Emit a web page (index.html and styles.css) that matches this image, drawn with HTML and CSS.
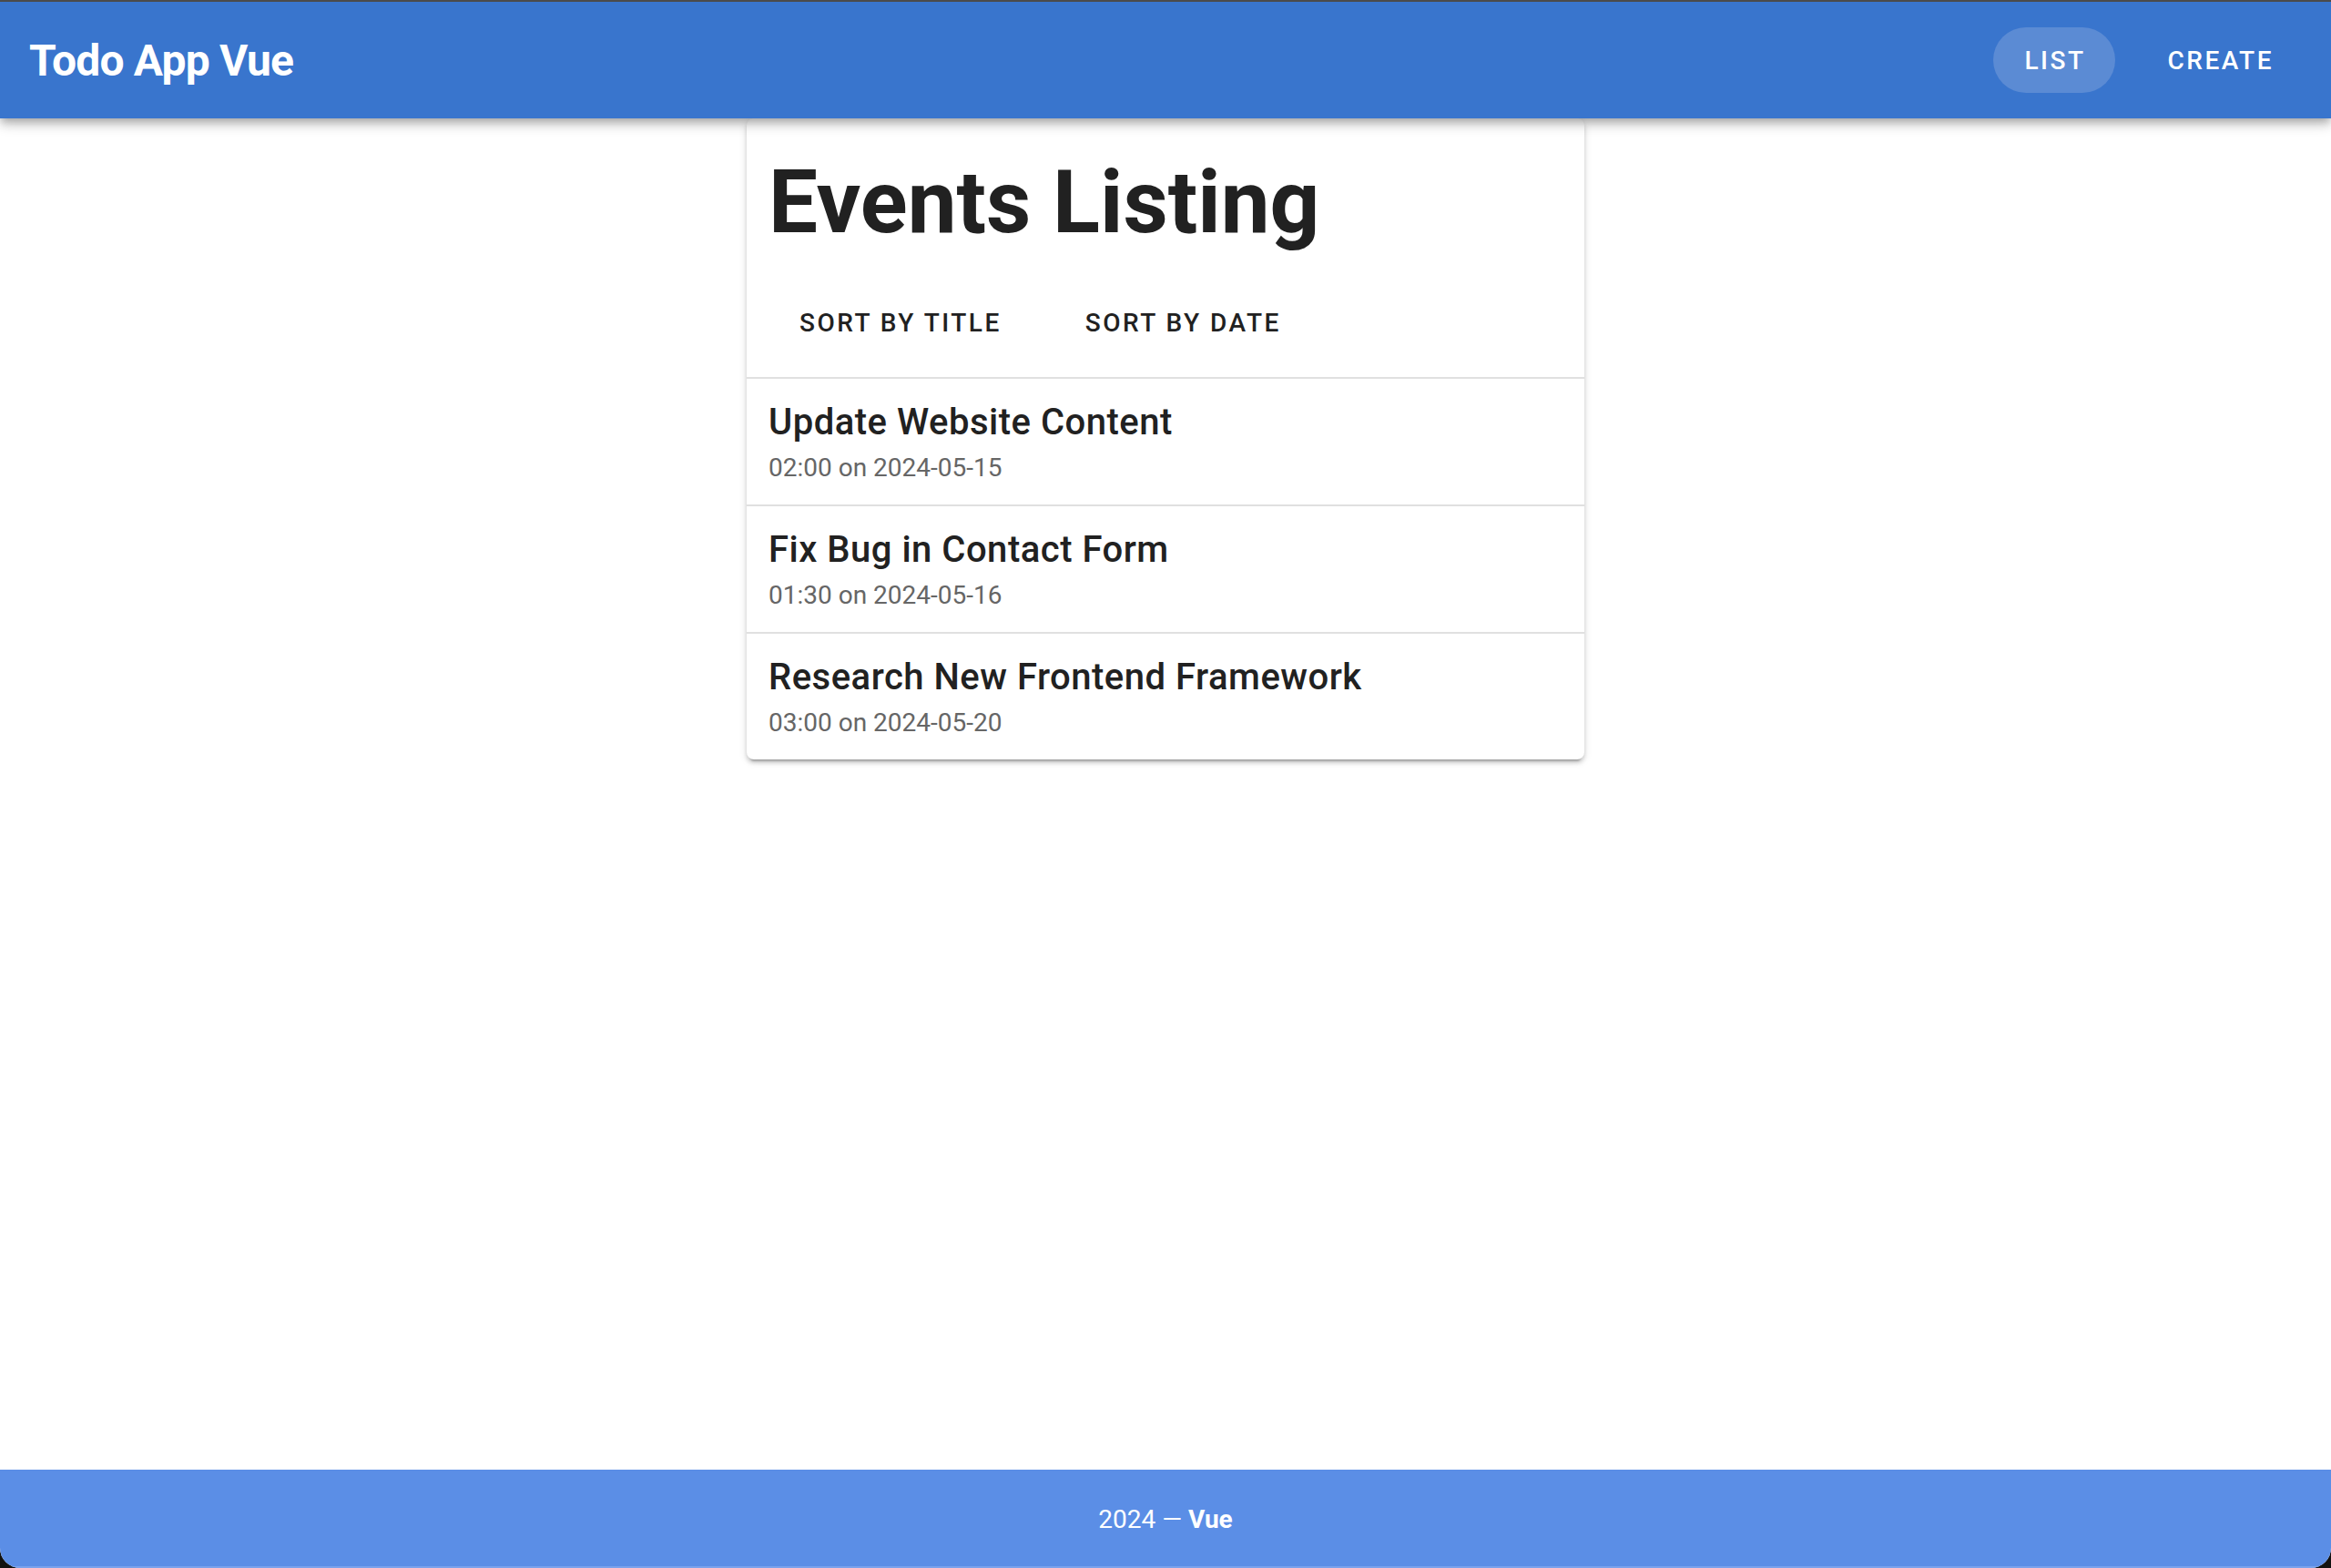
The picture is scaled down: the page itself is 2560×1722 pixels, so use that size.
FILE: index.html
```html
<!DOCTYPE html>
<html lang="en">
<head>
<meta charset="utf-8">
<title>Todo App Vue</title>
<link rel="stylesheet" href="styles.css">
</head>
<body>
<div class="app">
  <header class="app-bar">
    <div class="app-title">Todo App Vue</div>
    <nav class="nav">
      <a class="nav-btn active">List</a>
      <a class="nav-btn">Create</a>
    </nav>
  </header>
  <main class="main">
    <section class="card">
      <div class="card-head">
        <h1 class="card-title">Events Listing</h1>
        <div class="sort-row">
          <button class="sort-btn">Sort by title</button>
          <button class="sort-btn">Sort by date</button>
        </div>
      </div>
      <ul class="events">
        <li class="event">
          <div class="event-title">Update Website Content</div>
          <div class="event-sub">02:00 on 2024-05-15</div>
        </li>
        <li class="event">
          <div class="event-title">Fix Bug in Contact Form</div>
          <div class="event-sub">01:30 on 2024-05-16</div>
        </li>
        <li class="event">
          <div class="event-title">Research New Frontend Framework</div>
          <div class="event-sub">03:00 on 2024-05-20</div>
        </li>
      </ul>
    </section>
  </main>
  <footer class="footer">2024 — <strong>Vue</strong></footer>
</div>
</body>
</html>
```

FILE: styles.css
```css
html, body {
  margin: 0;
  padding: 0;
  height: 100%;
}
body {
  background: #121210;
  font-family: Roboto, "Noto Sans", "Liberation Sans", sans-serif;
  color: #212121;
}
.app {
  height: 1722px;
  display: flex;
  flex-direction: column;
  background: #ffffff;
  border-top: 2px solid #4b4b4b;
  border-radius: 0 0 22px 22px;
  overflow: hidden;
  box-sizing: border-box;
}
.app-bar {
  position: relative;
  z-index: 2;
  height: 128px;
  flex: 0 0 auto;
  display: flex;
  align-items: center;
  justify-content: space-between;
  background: #3975cd;
  color: #ffffff;
  padding: 0 31px 0 32px;
  box-shadow: 0 4px 8px -2px rgba(0,0,0,.2), 0 8px 10px 0 rgba(0,0,0,.14), 0 2px 20px 0 rgba(0,0,0,.12);
}
.app-title {
  font-size: 48px;
  font-weight: 700;
  letter-spacing: -0.8px;
}
.nav {
  display: flex;
  align-items: center;
  gap: 24px;
}
.nav-btn {
  display: flex;
  align-items: center;
  height: 72px;
  padding: 0 32px 0 34px;
  border-radius: 36px;
  font-size: 28px;
  font-weight: 500;
  letter-spacing: 2.5px;
  text-transform: uppercase;
  color: #ffffff;
  cursor: pointer;
}
.nav-btn.active {
  background: #5b8bd4;
}
.main {
  flex: 1 1 auto;
  position: relative;
  z-index: 1;
}
.card {
  width: 920px;
  margin: 0 auto;
  background: #ffffff;
  border-radius: 8px;
  box-shadow: 0 6px 2px -4px rgba(0,0,0,.2), 0 4px 4px 0 rgba(0,0,0,.14), 0 2px 10px 0 rgba(0,0,0,.12);
}
.card-head {
  padding: 36px 24px 24px;
}
.card-title {
  margin: 0;
  font-size: 96px;
  line-height: 112px;
  font-weight: 700;
  color: #212121;
  letter-spacing: 0;
}
.sort-row {
  display: flex;
  gap: 28px;
  margin: 40px 0 0 2px;
}
.sort-btn {
  height: 72px;
  padding: 0 32px;
  border: none;
  background: transparent;
  border-radius: 8px;
  font-family: Roboto, "Noto Sans", "Liberation Sans", sans-serif;
  font-size: 28px;
  font-weight: 500;
  letter-spacing: 2.5px;
  text-transform: uppercase;
  color: #212121;
  cursor: pointer;
}
.events {
  list-style: none;
  margin: 0;
  padding: 0;
}
.event {
  border-top: 2px solid #e0e0e0;
  padding: 24px 24px 14px;
}
.event-title {
  font-size: 40px;
  line-height: 48px;
  font-weight: 500;
  letter-spacing: 0.5px;
  color: #212121;
}
.event-sub {
  font-size: 28px;
  line-height: 52px;
  color: #666666;
}
.footer {
  flex: 0 0 auto;
  background: #5b8ee6;
  color: #ffffff;
  text-align: center;
  font-size: 28px;
  line-height: 48px;
  padding: 31px 0 27px;
  border-bottom: 2px solid #7aa2ec;
}
.footer strong {
  font-weight: 700;
}
```
